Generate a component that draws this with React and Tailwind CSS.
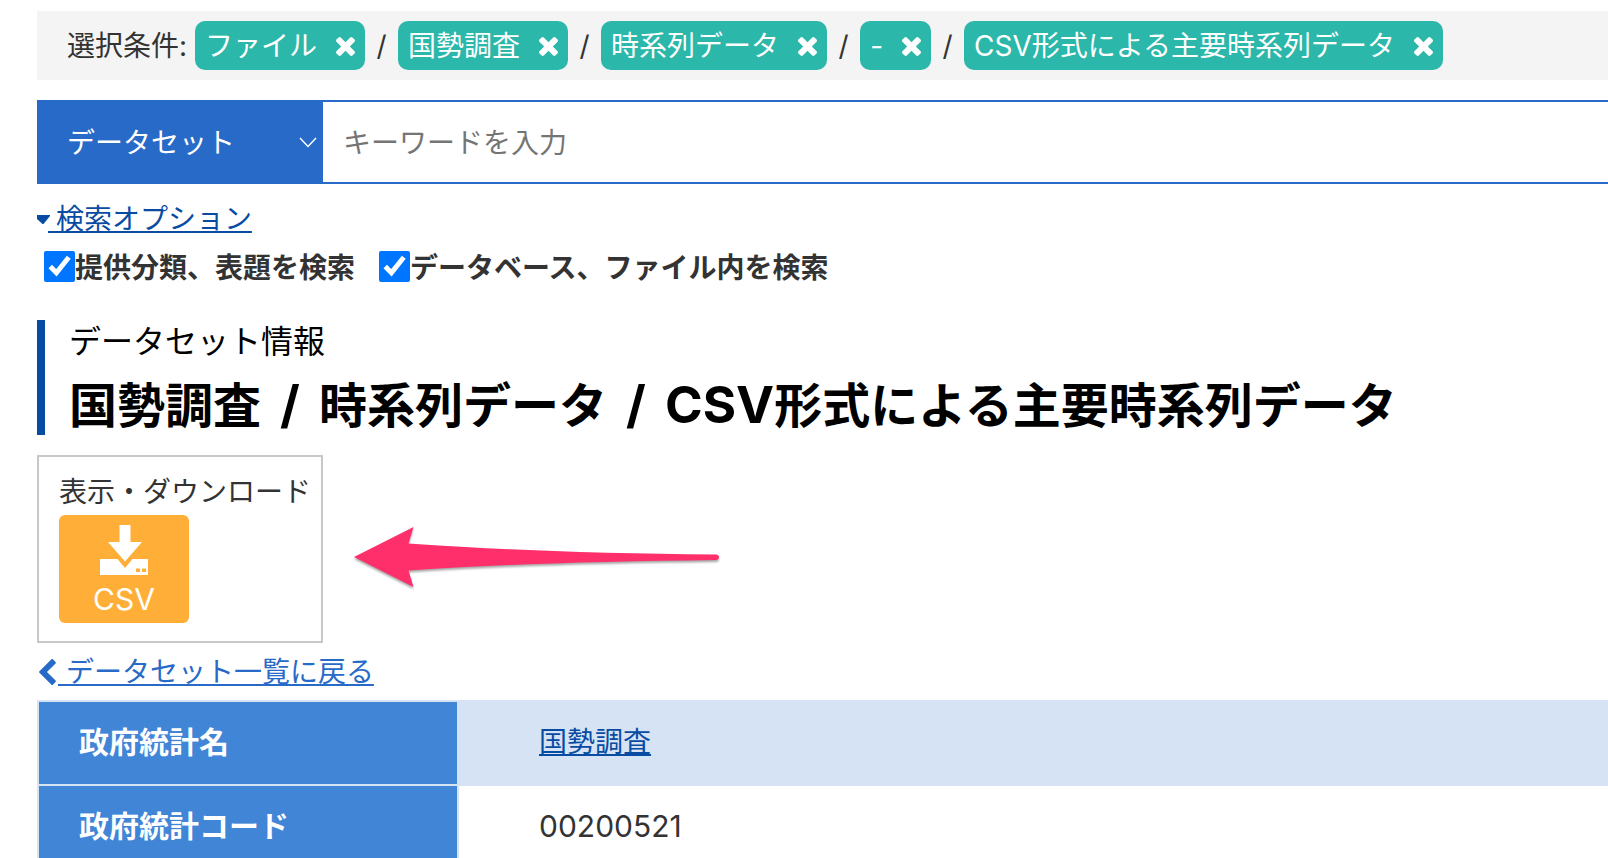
const conditions = ["ファイル", "国勢調査", "時系列データ", "-", "CSV形式による主要時系列データ"]

const searchOptions = [
  { id: "opt-title", label: "提供分類、表題を検索" },
  { id: "opt-inner", label: "データベース、ファイル内を検索" },
]

const rows = [
  { name: "政府統計名", value: "国勢調査", href: "#survey" },
  { name: "政府統計コード", value: "00200521" },
]

function TimesIcon() {
  return (
    <svg viewBox="110 -18 1188 1188" className="mt-0.5 size-[19px]" fill="currentColor" aria-hidden="true">
      <path d="M1298 214q0 -40 -28 -68l-136 -136q-28 -28 -68 -28t-68 28l-294 294l-294 -294q-28 -28 -68 -28t-68 28l-136 136q-28 28 -28 68t28 68l294 294l-294 294q-28 28 -28 68t28 68l136 136q28 28 68 28t68 -28l294 -294l294 294q28 28 68 28t68 -28l136 -136q28 -28 28 -68t-28 -68l-294 -294l294 -294q28 -28 28 -68z" />
    </svg>
  )
}

function ChevronLeftIcon() {
  return (
    <svg viewBox="154 -102 1036 1612" className="mx-0.5 h-[26px] w-[17px]" fill="currentColor" aria-hidden="true">
      <path d="M1171 1235l-531 -531l531 -531q19 -19 19 -45t-19 -45l-166 -166q-19 -19 -45 -19t-45 19l-742 742q-19 19 -19 45t19 45l742 742q19 19 45 19t45 -19l166 -166q19 -19 19 -45t-19 -45z" />
    </svg>
  )
}

function DownloadIcon() {
  return (
    <svg viewBox="0 0 48 50" className="h-[50px] w-12" aria-hidden="true">
      <path fill="#fff" d="M19.5 0h11v17h11.5l-17 19.500-17-19.500h11.500zM0 34h17.500l7.500 9 7.500-9h15.500v16h-48z" />
      <path fill="#ffaf37" d="M36 43.500h4v3.500h-4zM42 43.500h4v3.500h-4z" />
    </svg>
  )
}

function Arrow() {
  return (
    <svg viewBox="0 0 372 68" className="h-[68px] w-[372px] drop-shadow-[0_2px_1px_rgba(0,0,0,0.35)]" aria-hidden="true">
      <path
        fill="#ff2f6c"
        d="M2 32L61.500 2L56.500 18.500C150 25 250 28.500 364 29.500Q367 30 367 32Q367 34.500 364 35C250 36.500 150 39 56.500 45.500L61.500 62Z"
      />
    </svg>
  )
}

function Separator() {
  return <span className="mx-[7px] text-[51px] whitespace-pre"> / </span>
}

export default function App() {
  return (
    <main className="overflow-hidden bg-white pt-[11px] pl-[37px] font-[Inter,'Noto_Sans_CJK_JP',sans-serif] text-[28px] leading-[40px] text-[#333]">
      <div className="flex items-center bg-[#f4f4f4] py-[10px] pl-[30px] whitespace-nowrap">
        <span className="mr-2">選択条件:</span>
        <ul className="flex">
          {conditions.map((label, i) => (
            <li key={label} className="flex items-center">
              {i > 0 && <span className="w-[33px] text-center">/</span>}
              <button
                type="button"
                aria-label={`${label} を解除`}
                className="flex h-[49px] items-center gap-[19px] rounded-[10px] bg-[#2bb7a9] px-[10px] text-white"
              >
                {label}
                <TimesIcon />
              </button>
            </li>
          ))}
        </ul>
      </div>

      <form className="mt-5 flex h-[84px] border-y-2 border-[#286ac7]">
        <div className="relative w-[286px] shrink-0 bg-[#286ac7] text-white">
          <select aria-label="検索対象" className="h-full w-full appearance-none pt-0.5 pl-[30px] outline-none">
            <option>データセット</option>
          </select>
          <svg
            viewBox="0 0 18 11"
            className="pointer-events-none absolute top-[35px] right-[6px] h-[11px] w-[18px]"
            fill="none"
            stroke="currentColor"
            strokeWidth="1.5"
            aria-hidden="true"
          >
            <path d="M1 1l8 8.500 8-8.500" />
          </svg>
        </div>
        <input
          type="text"
          aria-label="キーワード"
          placeholder="キーワードを入力"
          className="min-w-0 flex-1 px-5 pt-0.5 outline-none placeholder:text-[#757575]"
        />
      </form>

      <a href="#options" className="mt-[15px] flex w-fit items-center text-[#084ba3]">
        <svg viewBox="0 0 13 9" className="h-[9px] w-[13px]" fill="currentColor" aria-hidden="true">
          <path d="M0 0h13v1l-6.500 8h-1l-5.500-5z" />
        </svg>
        <span className="-ml-0.5 whitespace-pre underline decoration-2 underline-offset-2"> 検索オプション</span>
      </a>

      <div className="mt-[5px] flex gap-6 pl-[7px] font-bold">
        {searchOptions.map(({ id, label }) => (
          <div key={id} className="flex items-center">
            <input id={id} type="checkbox" defaultChecked className="size-[31px] accent-[#0075ff]" />
            <label htmlFor={id} className="pt-1">{label}</label>
          </div>
        ))}
      </div>

      <header className="mt-8 border-l-8 border-[#084ba3] pl-6 whitespace-nowrap text-black">
        <p className="text-[32px] leading-[44px]">データセット情報</p>
        <h1 className="pt-3 text-[48px] leading-[58px] font-bold">
          国勢調査
          <Separator />
          時系列データ
          <Separator />
          <span className="text-[51px]">CSV</span>形式による主要時系列データ
        </h1>
      </header>

      <div className="mt-5 flex items-center">
        <section className="w-[286px] shrink-0 border-2 border-[#c8c8c8] py-[18px] pl-5 whitespace-nowrap">
          <h2 className="leading-[34px]">表示・ダウンロード</h2>
          <button
            type="button"
            className="mt-1.5 flex h-[108px] w-[130px] flex-col items-center rounded-md bg-[#ffaf37] pt-[10px] text-[30px] leading-[48px] text-white"
          >
            <DownloadIcon />
            CSV
          </button>
        </section>
        <div className="ml-[29px] pt-5">
          <Arrow />
        </div>
      </div>

      <a href="#list" className="mt-[9px] flex w-fit items-center text-[#286ac7]">
        <ChevronLeftIcon />
        <span className="whitespace-pre underline decoration-2 underline-offset-2"> データセット一覧に戻る</span>
      </a>

      <table className="mt-2 w-full border-collapse text-left">
        <tbody>
          {rows.map((row) => (
            <tr key={row.name} className="h-[84px] odd:bg-[#d5e3f5]">
              <th scope="row" className="w-[420px] border-2 border-[#d5e3f5] bg-[#4185d7] pb-0.5 pl-10 text-[30px] font-bold text-white">
                {row.name}
              </th>
              <td className="border-y-2 border-[#d5e3f5] pb-0.5 pl-20">
                {row.href ? (
                  <a href={row.href} className="text-[#084ba3] underline decoration-2 underline-offset-2">
                    {row.value}
                  </a>
                ) : (
                  <span className="text-[30px]">{row.value}</span>
                )}
              </td>
            </tr>
          ))}
        </tbody>
      </table>
    </main>
  )
}
